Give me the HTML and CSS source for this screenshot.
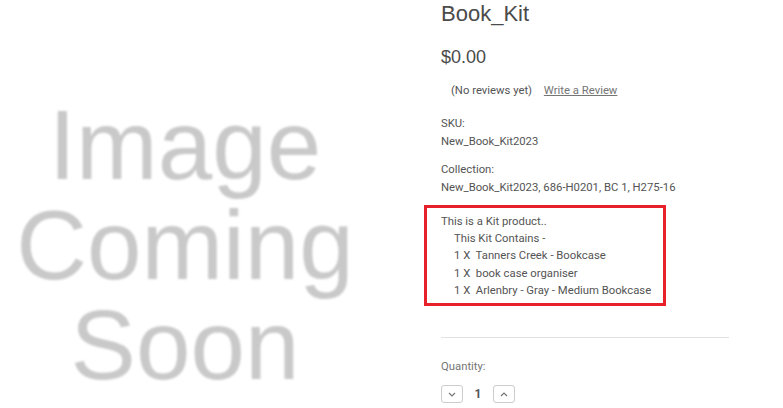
FILE: index.html
```html
<!DOCTYPE html>
<html lang="en">
<head>
    <meta charset="UTF-8">
    <title>Book_Kit</title>
    <link rel="stylesheet" href="styles.css">
</head>
<body>
    <div class="product">
        <div class="product-image">
            <div class="placeholder">Image<br>Coming<br>Soon</div>
        </div>
        <div class="product-info">
            <h1 class="title">Book_Kit</h1>
            <div class="price">$0.00</div>
            <div class="reviews">
                <span>(No reviews yet)</span>
                <a href="#">Write a Review</a>
            </div>
            <dl class="details">
                <dt>SKU:</dt>
                <dd>New_Book_Kit2023</dd>
                <dt>Collection:</dt>
                <dd>New_Book_Kit2023, 686-H0201, BC 1, H275-16</dd>
            </dl>
            <div class="kit-box">
                <p>This is a Kit product..</p>
                <p class="indent">This Kit Contains -</p>
                <p class="indent">1 X&nbsp; Tanners Creek - Bookcase</p>
                <p class="indent">1 X&nbsp; book case organiser</p>
                <p class="indent">1 X&nbsp; Arlenbry - Gray - Medium Bookcase</p>
            </div>
            <hr class="divider">
            <div class="qty-label">Quantity:</div>
            <div class="qty">
                <button class="qty-btn" type="button">
                    <svg width="8" height="5" viewBox="0 0 8 5"><path d="M1 1l3 3 3-3" fill="none" stroke="#757575" stroke-width="1.2"/></svg>
                </button>
                <span class="qty-value">1</span>
                <button class="qty-btn" type="button">
                    <svg width="8" height="5" viewBox="0 0 8 5"><path d="M1 4l3-3 3 3" fill="none" stroke="#757575" stroke-width="1.2"/></svg>
                </button>
            </div>
        </div>
    </div>
</body>
</html>
```

FILE: styles.css
```css
body {
    margin: 0;
    background: #fff;
    font-family: Roboto, "Liberation Sans", sans-serif;
    color: #545454;
    overflow: hidden;
}

.product {
    display: flex;
    height: 408px;
}

/* Left image column */
.product-image {
    width: 370px;
    flex: none;
    margin-right: 71px;
    padding-top: 95px;
    text-align: center;
}

.placeholder {
    font-family: "Liberation Sans", Arial, sans-serif;
    font-size: 98px;
    line-height: 100px;
    color: #c9c9c9;
    filter: blur(1.2px);
}

/* Right info column */
.product-info {
    width: 288px;
    font-size: 11.3px;
}

.title {
    margin: 0;
    padding-top: 1px;
    font-family: "Liberation Sans", Arial, sans-serif;
    font-size: 22px;
    line-height: 26px;
    font-weight: normal;
    color: #4b4b4b;
}

.price {
    margin-top: 19px;
    font-family: "Liberation Sans", Arial, sans-serif;
    font-size: 18px;
    line-height: 22px;
    color: #4b4b4b;
}

.reviews {
    margin-top: 15px;
    padding-left: 10px;
    line-height: 16px;
}

.reviews a {
    margin-left: 9px;
    color: #757575;
}

.details {
    margin: 16px 0 0;
    line-height: 18px;
}

.details dd {
    margin: 0 0 10px;
}

.details dd:last-child {
    margin-bottom: 0;
}

.kit-box {
    margin: 8px 0 0 -17px;
    width: 222px;
    padding: 5px 0 4px 14px;
    border: 3px solid #e8202a;
}

.kit-box p {
    margin: 0;
    line-height: 17.2px;
}

.kit-box .indent {
    padding-left: 13px;
}

.divider {
    margin: 31px 0 0;
    border: 0;
    border-top: 1px solid #e2e2e2;
}

.qty-label {
    margin-top: 21px;
    line-height: 16px;
    color: #757575;
}

.qty {
    display: flex;
    align-items: center;
    margin-top: 10px;
}

.qty-btn {
    width: 22px;
    height: 18px;
    padding: 0;
    border: 1px solid #ccc;
    border-radius: 3px;
    background: #fff;
    display: flex;
    align-items: center;
    justify-content: center;
}

.qty-value {
    width: 30px;
    text-align: center;
    font-size: 12px;
    font-weight: bold;
    color: #545454;
}
```
